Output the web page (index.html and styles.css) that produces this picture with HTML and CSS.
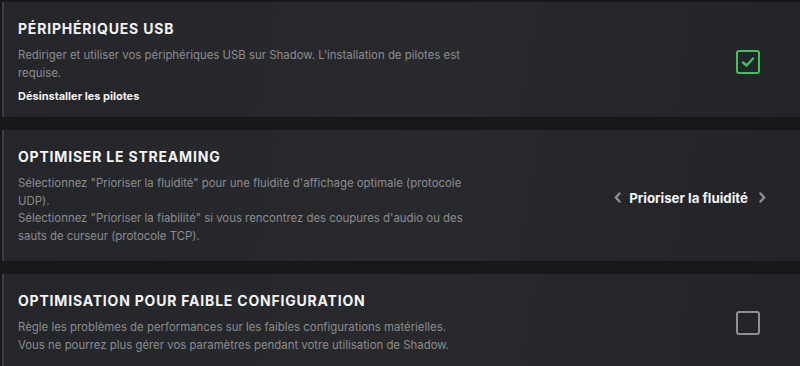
FILE: index.html
```html
<!DOCTYPE html>
<html>
  <head>
    <title>Paramètres Shadow</title>
    <link rel="stylesheet" href="styles.css">
  </head>
  <body>
    <div class="settings">

      <div class="card card-compact">
        <div class="card-text">
          <h2>Périphériques USB</h2>
          <p>Rediriger et utiliser vos périphériques USB sur Shadow. L'installation de pilotes est requise.</p>
          <a class="card-link" href="#">Désinstaller les pilotes</a>
        </div>
        <div class="card-control">
          <span class="checkbox checked">
            <svg width="14" height="12" viewBox="0 0 14 12"><path d="M2 6.5 L5.5 9.5 L12 2.5" fill="none" stroke="#3fc45c" stroke-width="2.4" stroke-linecap="round" stroke-linejoin="round"/></svg>
          </span>
        </div>
      </div>

      <div class="card">
        <div class="card-text">
          <h2>Optimiser le streaming</h2>
          <p>Sélectionnez "Prioriser la fluidité" pour une fluidité d'affichage optimale (protocole UDP).<br>
          Sélectionnez "Prioriser la fiabilité" si vous rencontrez des coupures d'audio ou des sauts de curseur (protocole TCP).</p>
        </div>
        <div class="card-control">
          <div class="selector">
            <svg width="7" height="11" viewBox="0 0 7 11"><path d="M5.5 1.5 L1.8 5.5 L5.5 9.5" fill="none" stroke="#8e8f92" stroke-width="2.4" stroke-linecap="round" stroke-linejoin="round"/></svg>
            <span>Prioriser la fluidité</span>
            <svg width="7" height="11" viewBox="0 0 7 11"><path d="M1.5 1.5 L5.2 5.5 L1.5 9.5" fill="none" stroke="#8e8f92" stroke-width="2.4" stroke-linecap="round" stroke-linejoin="round"/></svg>
          </div>
        </div>
      </div>

      <div class="card">
        <div class="card-text">
          <h2>Optimisation pour faible configuration</h2>
          <p>Règle les problèmes de performances sur les faibles configurations matérielles.<br>
          Vous ne pourrez plus gérer vos paramètres pendant votre utilisation de Shadow.</p>
        </div>
        <div class="card-control">
          <span class="checkbox"></span>
        </div>
      </div>

    </div>
  </body>
</html>
```

FILE: styles.css
```css
body {
    margin: 0;
    background: #161719;
    font-family: Inter, "Liberation Sans", sans-serif;
    overflow: hidden;
}
/* stacked setting cards */
.settings {
    display: flex;
    flex-direction: column;
    gap: 13px;
    padding: 2px 0 0 2px;
}
.card {
    display: flex;
    align-items: center;
    background: linear-gradient(100deg, #252629 0%, #28292c 55%, #232427 100%);
    border-left: 2px solid #3c3d40;
    padding: 17px 34px 16px 14px;
}
.card-compact {
    padding-bottom: 12px;
}
.card-text {
    width: 462px;
}
.card h2 {
    margin: 0;
    font-size: 14px;
    line-height: 20px;
    font-weight: 700;
    letter-spacing: 0.8px;
    text-transform: uppercase;
    color: #f4f4f5;
}
.card p {
    margin: 8px 0 0;
    font-size: 11.4px;
    line-height: 17.5px;
    color: #8b8c8f;
}
.card-link {
    display: block;
    margin-top: 5px;
    font-size: 11px;
    line-height: 18px;
    font-weight: 700;
    color: #f2f2f2;
    text-decoration: none;
}
.card-control {
    flex: 1;
    display: flex;
    justify-content: flex-end;
}
.checkbox {
    box-sizing: border-box;
    width: 24px;
    height: 24px;
    margin-right: 6px;
    border: 2px solid #8f9093;
    border-radius: 3px;
    display: flex;
    align-items: center;
    justify-content: center;
}
.checkbox.checked {
    border-color: #3fc45c;
}
.selector {
    display: flex;
    align-items: center;
    gap: 8px;
    font-size: 13.3px;
    font-weight: 700;
    color: #f4f4f5;
    margin-top: 3px;
}
.selector span {
    margin-right: 3px;
}
```
